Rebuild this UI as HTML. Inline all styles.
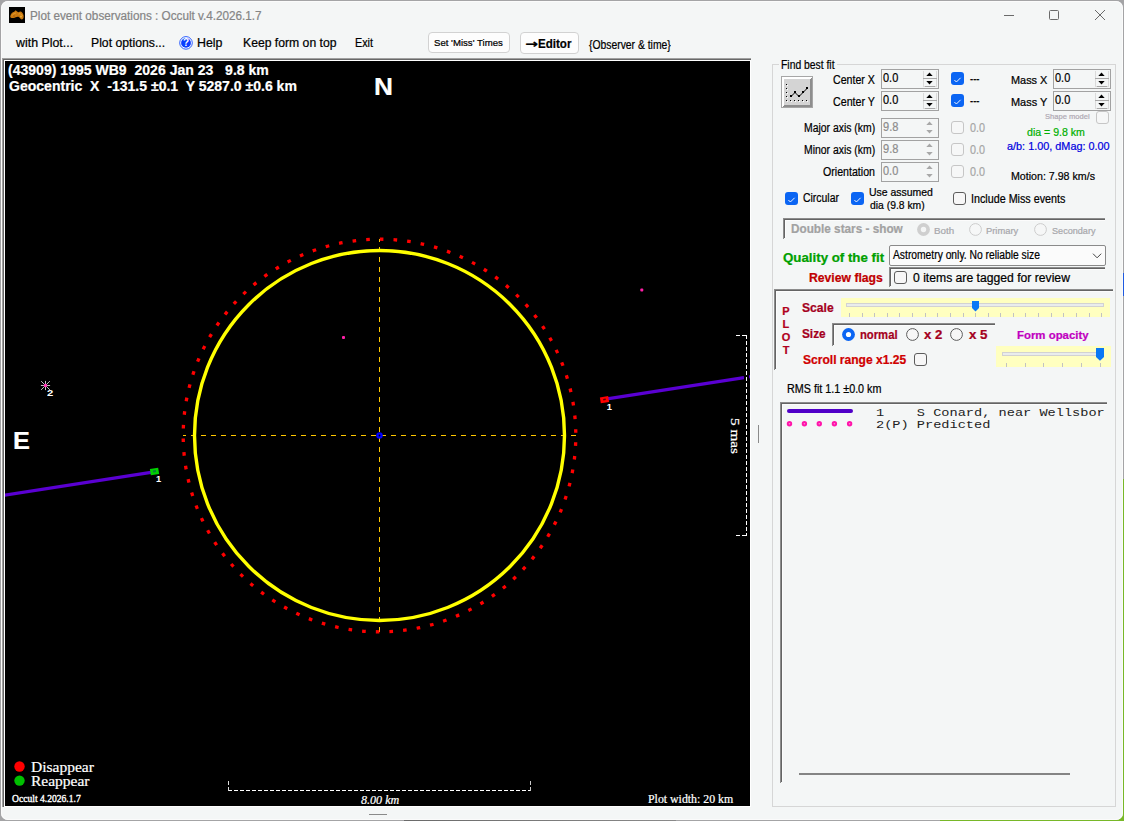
<!DOCTYPE html>
<html lang="en"><head><meta charset="utf-8"><title>Plot event observations : Occult v.4.2026.1.7</title>
<style>
html,body{margin:0;padding:0}
body{width:1124px;height:821px;overflow:hidden;background:#a4a4a6;position:relative}
#edge-r{position:absolute;left:1123px;top:0;width:1px;height:821px;background:linear-gradient(#a4a4a6 0,#a4a4a6 273px,#1e5ae0 273px,#1e5ae0 296px,#a4a4a6 296px,#a4a4a6 479px,#78b828 479px)}
#edge-b{position:absolute;left:0;top:820px;width:1124px;height:1px;background:linear-gradient(90deg,#a4a4a6 0,#a4a4a6 404px,#6a6a6a 404px,#8a8a8a 676px,#a4a4a6 676px,#a4a4a6 940px,#78b828 940px)}
#win{position:absolute;left:1px;top:1px;width:1122px;height:819px;background:#f4f6f6;border-radius:7px;box-shadow:inset 0 0 0 1px #fbfbfb}
#root{position:absolute;left:0;top:0;width:1124px;height:821px}
.a{position:absolute;display:block}
.t{position:absolute;white-space:pre;line-height:normal;transform-origin:0 0}
.ls{font-family:"Liberation Sans",sans-serif}
.lr{font-family:"Liberation Serif",serif}
.lm{font-family:"Liberation Mono",monospace}
.dj{font-family:"DejaVu Sans","Liberation Sans",sans-serif}
.b{font-weight:bold}.i{font-style:italic}
.t{-webkit-text-stroke:0.22px currentColor}
</style></head>
<body>
<div id="edge-r"></div><div id="edge-b"></div><div class="a" style="left:1114px;top:811px;width:10px;height:10px;background:#78b828"></div>
<div id="win"></div>
<div id="root">
<header id="titlebar">
<svg class="a" style="left:9px;top:7px" width="16" height="16" viewBox="0 0 16 16"><rect width="16" height="16" fill="#000"/><path d="M1.2 9.5 C1.5 7 3.5 5.2 5.2 4.8 L6.6 3.2 L8.2 4.6 C9.2 5.6 9.8 5.2 11 4.6 C12.6 4.4 14.2 6.2 14.6 8.6 C15 10.6 14.2 12.4 13 12.6 C11.6 12.6 11 10.6 9.4 9.8 C7.8 9.4 6.4 10.8 4.6 11 C2.8 11.2 1.2 10.8 1.2 9.5 Z" fill="#c8780f"/><path d="M3 8.5 C4 7 5.5 6.2 6.8 6 M9.5 7 C11 6.4 12.6 7 13.4 8.8" stroke="#e8a030" stroke-width="1" fill="none"/><circle cx="12" cy="9.6" r="1" fill="#e8b040"/><circle cx="5" cy="9" r=".8" fill="#a85c08"/></svg>
<span class="t ls" style="left:29.76px;top:8.70px;font-size:12px;color:#858585;transform:scaleX(0.9763);">Plot event observations : Occult v.4.2026.1.7</span>
<svg class="a" style="left:995px;top:5px" width="120" height="22" viewBox="995 5 120 22" fill="none" stroke="#6a6a6a" stroke-width="1"><path d="M1004 15.5H1014"/><rect x="1049.5" y="10.5" width="9" height="9" rx="1"/><path d="M1095 10L1105 20M1105 10L1095 20"/></svg>
</header>
<nav id="menubar">
<span class="t ls" style="left:16.20px;top:35.80px;font-size:12px;color:#000;transform:scaleX(1.0313);">with Plot...</span>
<span class="t ls" style="left:90.72px;top:35.80px;font-size:12px;color:#000;transform:scaleX(1.0187);">Plot options...</span>
<svg class="a" style="left:178px;top:35px" width="16" height="16" viewBox="0 0 16 16"><circle cx="8" cy="7.9" r="6.3" fill="#fff" stroke="#2a5cff" stroke-width="1"/><circle cx="8" cy="7.9" r="4.9" fill="#0a3cff"/><text x="8" y="11.4" text-anchor="middle" font-family="Liberation Sans,sans-serif" font-weight="bold" font-size="10" fill="#fff">?</text></svg>
<span class="t ls" style="left:196.51px;top:35.80px;font-size:12px;color:#000;transform:scaleX(1.0336);">Help</span>
<span class="t ls" style="left:242.53px;top:35.80px;font-size:12px;color:#000;transform:scaleX(1.0155);">Keep form on top</span>
<span class="t ls" style="left:354.64px;top:35.80px;font-size:12px;color:#000;transform:scaleX(0.8966);">Exit</span>
<div class="a " style="left:428px;top:32px;width:82px;height:21px;box-sizing:border-box;border:1px solid #d2d2d2;border-radius:4px;background:#fdfdfd;"></div>
<span class="t ls" style="left:433.57px;top:36.80px;font-size:9.5px;color:#000;transform:scaleX(1.0110);">Set &#x27;Miss&#x27; Times</span>
<div class="a " style="left:520px;top:32px;width:59px;height:22px;box-sizing:border-box;border:1px solid #d2d2d2;border-radius:4px;background:#fdfdfd;"></div>
<span class="t dj b" style="left:525.36px;top:36.90px;font-size:12px;color:#000;transform:scaleX(1.2698);">→</span>
<span class="t ls b" style="left:538.05px;top:35.70px;font-size:13px;color:#000;transform:scaleX(0.8897);">Editor</span>
<span class="t ls" style="left:589.34px;top:37.50px;font-size:12px;color:#000;transform:scaleX(0.8630);">{Observer &amp; time}</span>
</nav>
<main id="plot">
<div class="a " style="left:2px;top:58px;width:749px;height:749px;background:#a0a0a0;"></div>
<div class="a " style="left:3px;top:59px;width:748px;height:748px;background:#696969;"></div>
<div class="a " style="left:4px;top:60px;width:747px;height:747px;background:#fff;"></div>
<div class="a " style="left:5px;top:61px;width:745px;height:745px;background:#000;"></div>
<svg class="a" style="left:5px;top:61px" width="745" height="745" viewBox="5 61 745 745"><g stroke="#5a00d2" stroke-width="3.2" fill="none"><path d="M4 495.36L151 472.45"/><path d="M607 398.95L744 377.69"/><path d="M749 376.90L751 376.60"/></g><g stroke="#ffc800" stroke-width="1" fill="none" shape-rendering="crispEdges"><path d="M183 435.5H576" stroke-dasharray="5 5" stroke-dashoffset="2"/><path d="M379.5 239V632" stroke-dasharray="5 5" stroke-dashoffset="2"/></g><circle cx="379.5" cy="435.5" r="185" fill="none" stroke="#ffff00" stroke-width="3.4"/><circle cx="379.5" cy="435.5" r="196.3" fill="none" stroke="#ff0000" stroke-width="3.3" stroke-dasharray="3.6000 10.1043" stroke-dashoffset="-6.8337"/><circle cx="379.5" cy="435.5" r="2.1" fill="none" stroke="#0000ff" stroke-width="2.4"/><rect x="342.0" y="336.1" width="3" height="3" rx="1" fill="#ff20a8"/><rect x="640.3" y="288.6" width="3" height="3" rx="1" fill="#ff20a8"/><path d="M40.90 385.50L50.10 385.50M41.11 381.11L49.89 389.89M45.50 380.90L45.50 390.10M49.89 381.11L41.11 389.89" stroke="#d8d8d8" stroke-width="0.9" fill="none"/><circle cx="45.5" cy="385.5" r="1.7" fill="#ff30b4"/><g transform="rotate(-9 154.5 471.5)"><rect x="150.3" y="468.3" width="8.4" height="6.4" fill="#00d000"/><rect x="153" y="470.3" width="3" height="2" fill="#0a7a3a"/></g><g transform="rotate(-9 604.5 399.7)"><rect x="600.3" y="396.7" width="8.4" height="6" fill="#ff0000"/><rect x="603.2" y="398.8" width="2.6" height="1.4" fill="#500"/></g><rect x="744" y="333" width="5" height="206" fill="#000"/><g stroke="#fff" stroke-width="1" fill="none" shape-rendering="crispEdges"><path d="M746.5 335V536" stroke-dasharray="4 2"/><path d="M736 335.5H747" stroke-dasharray="4 2"/><path d="M736 535.5H747" stroke-dasharray="4 2"/></g><g stroke="#fff" stroke-width="1" fill="none" shape-rendering="crispEdges"><path d="M228 790.5H531" stroke-dasharray="4 2"/><path d="M228.5 791V780" stroke-dasharray="4 2" stroke="#ddd"/><path d="M530.5 791V780" stroke-dasharray="4 2" stroke="#c8c8c8"/></g><circle cx="19.5" cy="766.5" r="5.2" fill="#ff0000"/><circle cx="19.5" cy="780.6" r="5.2" fill="#00c000"/></svg>
<span class="t ls b" style="left:8.10px;top:62.00px;font-size:14px;color:#fff;transform:scaleX(1.0033);">(43909) 1995 WB9  2026 Jan 23   9.8 km</span>
<span class="t ls b" style="left:8.54px;top:78.00px;font-size:14px;color:#fff;transform:scaleX(1.0022);">Geocentric  X  -131.5 ±0.1  Y 5287.0 ±0.6 km</span>
<span class="t ls b" style="left:373.69px;top:73.00px;font-size:24px;color:#fff;transform:scaleX(1.0946);">N</span>
<span class="t ls b" style="left:12.95px;top:427.10px;font-size:24px;color:#fff;transform:scaleX(1.0546);">E</span>
<span class="t ls b" style="left:46.81px;top:387.80px;font-size:9.33px;color:#fff;transform:scaleX(1.2058);-webkit-text-stroke:0;">2</span>
<span class="t ls b" style="left:156.04px;top:473.60px;font-size:9.33px;color:#fff;-webkit-text-stroke:0;">1</span>
<span class="t ls b" style="left:606.84px;top:401.50px;font-size:9.33px;color:#fff;-webkit-text-stroke:0;">1</span>
<span class="t lr" style="left:30.73px;top:757.90px;font-size:15.5px;color:#fff;transform:scaleX(1.0011);">Disappear</span>
<span class="t lr" style="left:31.03px;top:772.00px;font-size:15.5px;color:#fff;transform:scaleX(1.0001);">Reappear</span>
<span class="t lr" style="left:11.92px;top:793.80px;font-size:9.5px;color:#fff;transform:scaleX(1.0089);-webkit-text-stroke:0.35px #fff;">Occult 4.2026.1.7</span>
<span class="t lr i" style="left:361.16px;top:791.80px;font-size:13px;color:#fff;transform:scaleX(0.9290);">8.00 km</span>
<span class="t lr" style="left:647.64px;top:792.20px;font-size:12.5px;color:#fff;transform:scaleX(0.9477);">Plot width: 20 km</span>
<span class="t lr" style="left:730.5px;top:405.96px;font-size:13.33px;color:#fff;transform-origin:0 12px;transform:rotate(90deg) scaleX(1.1435);">5 mas</span>
</main>
<aside id="panel">
<div class="a " style="left:758px;top:425px;width:1px;height:18px;background:#8a8a8a;"></div>
<div class="a " style="left:369px;top:814px;width:18px;height:1px;background:#8a8a8a;"></div>
<div class="a " style="left:772px;top:64px;width:344px;height:743px;box-sizing:border-box;border:1px solid #d6d6d6;"></div>
<div class="a " style="left:779px;top:60px;width:58px;height:12px;background:#f4f6f6;"></div>
<span class="t ls" style="left:781.17px;top:57.60px;font-size:12px;color:#000;transform:scaleX(0.8629);">Find best fit</span>
<div class="a " style="left:781px;top:76px;width:32px;height:32px;"><svg width="32" height="32" viewBox="781 76 32 32" shape-rendering="crispEdges"><rect x="781" y="76" width="32" height="32" fill="#a6a6a6"/><rect x="782" y="77" width="30" height="30" fill="#8e8e8e"/><path d="M782 77H812L810 79H784V105L782 107Z" fill="#fff"/><rect x="784" y="79" width="26" height="26" fill="#d4d4d4"/><rect x="787" y="85" width="1" height="1" fill="#fff"/><rect x="786" y="84" width="1" height="1" fill="#000"/><rect x="787" y="89" width="1" height="1" fill="#fff"/><rect x="786" y="88" width="1" height="1" fill="#000"/><rect x="787" y="93" width="1" height="1" fill="#fff"/><rect x="786" y="92" width="1" height="1" fill="#000"/><rect x="787" y="97" width="1" height="1" fill="#fff"/><rect x="786" y="96" width="1" height="1" fill="#000"/><rect x="787" y="101" width="1" height="1" fill="#fff"/><rect x="786" y="100" width="1" height="1" fill="#000"/><rect x="791" y="101" width="1" height="1" fill="#fff"/><rect x="790" y="100" width="1" height="1" fill="#000"/><rect x="795" y="101" width="1" height="1" fill="#fff"/><rect x="794" y="100" width="1" height="1" fill="#000"/><rect x="799" y="101" width="1" height="1" fill="#fff"/><rect x="798" y="100" width="1" height="1" fill="#000"/><rect x="803" y="101" width="1" height="1" fill="#fff"/><rect x="802" y="100" width="1" height="1" fill="#000"/><rect x="807" y="101" width="1" height="1" fill="#fff"/><rect x="806" y="100" width="1" height="1" fill="#000"/><path d="M791 96.5L795 92.5L799 96.5L803 92.5L807 88.5" stroke="#000" stroke-width="1" fill="none" shape-rendering="auto"/><rect x="790" y="95" width="2" height="2" fill="#000"/><rect x="794" y="91" width="2" height="2" fill="#000"/><rect x="798" y="95" width="2" height="2" fill="#000"/><rect x="802" y="91" width="2" height="2" fill="#000"/><rect x="806" y="87" width="2" height="2" fill="#000"/></svg></div>
<div class="a " style="left:881px;top:69px;width:58px;height:20px;box-sizing:border-box;border:1px solid #a2a2a2;background:#f4f6f6;"></div>
<div class="a " style="left:923px;top:71px;width:14px;height:16px;box-sizing:border-box;border:1px solid #dadada;border-top:none;"></div>
<div class="a " style="left:923px;top:78px;width:14px;height:1px;background:#a8a8a8;"></div>
<div class="a " style="left:925px;top:86px;width:10px;height:1px;background:#a8a8a8;"></div>
<svg class="a" style="left:923px;top:69px" width="14" height="16" viewBox="0 0 14 16"><path d="M3.3 7L6.5 3.5L9.7 7Z M3.3 12L6.5 15.5L9.7 12Z" fill="#000"/></svg>
<span class="t ls" style="left:883.26px;top:71.00px;font-size:12.5px;color:#000;transform:scaleX(0.8760);">0.0</span>
<div class="a " style="left:881px;top:91px;width:58px;height:20px;box-sizing:border-box;border:1px solid #a2a2a2;background:#f4f6f6;"></div>
<div class="a " style="left:923px;top:93px;width:14px;height:16px;box-sizing:border-box;border:1px solid #dadada;border-top:none;"></div>
<div class="a " style="left:923px;top:100px;width:14px;height:1px;background:#a8a8a8;"></div>
<div class="a " style="left:925px;top:108px;width:10px;height:1px;background:#a8a8a8;"></div>
<svg class="a" style="left:923px;top:91px" width="14" height="16" viewBox="0 0 14 16"><path d="M3.3 7L6.5 3.5L9.7 7Z M3.3 12L6.5 15.5L9.7 12Z" fill="#000"/></svg>
<span class="t ls" style="left:883.26px;top:93.00px;font-size:12.5px;color:#000;transform:scaleX(0.8760);">0.0</span>
<div class="a " style="left:1053px;top:69px;width:58px;height:20px;box-sizing:border-box;border:1px solid #a2a2a2;background:#f4f6f6;"></div>
<div class="a " style="left:1095px;top:71px;width:14px;height:16px;box-sizing:border-box;border:1px solid #dadada;border-top:none;"></div>
<div class="a " style="left:1095px;top:78px;width:14px;height:1px;background:#a8a8a8;"></div>
<div class="a " style="left:1097px;top:86px;width:10px;height:1px;background:#a8a8a8;"></div>
<svg class="a" style="left:1095px;top:69px" width="14" height="16" viewBox="0 0 14 16"><path d="M3.3 7L6.5 3.5L9.7 7Z M3.3 12L6.5 15.5L9.7 12Z" fill="#000"/></svg>
<span class="t ls" style="left:1055.26px;top:71.00px;font-size:12.5px;color:#000;transform:scaleX(0.8760);">0.0</span>
<div class="a " style="left:1053px;top:91px;width:58px;height:20px;box-sizing:border-box;border:1px solid #a2a2a2;background:#f4f6f6;"></div>
<div class="a " style="left:1095px;top:93px;width:14px;height:16px;box-sizing:border-box;border:1px solid #dadada;border-top:none;"></div>
<div class="a " style="left:1095px;top:100px;width:14px;height:1px;background:#a8a8a8;"></div>
<div class="a " style="left:1097px;top:108px;width:10px;height:1px;background:#a8a8a8;"></div>
<svg class="a" style="left:1095px;top:91px" width="14" height="16" viewBox="0 0 14 16"><path d="M3.3 7L6.5 3.5L9.7 7Z M3.3 12L6.5 15.5L9.7 12Z" fill="#000"/></svg>
<span class="t ls" style="left:1055.26px;top:93.00px;font-size:12.5px;color:#000;transform:scaleX(0.8760);">0.0</span>
<div class="a " style="left:881px;top:118px;width:58px;height:20px;box-sizing:border-box;border:1px solid #a2a2a2;background:#f4f6f6;"></div>
<svg class="a" style="left:923px;top:118px" width="14" height="16" viewBox="0 0 14 16"><path d="M3.3 7L6.5 3.5L9.7 7Z M3.3 12L6.5 15.5L9.7 12Z" fill="#a8a8a8"/></svg>
<span class="t ls" style="left:883.20px;top:120.00px;font-size:12.5px;color:#8c8c8c;transform:scaleX(0.8828);">9.8</span>
<div class="a " style="left:881px;top:140px;width:58px;height:20px;box-sizing:border-box;border:1px solid #a2a2a2;background:#f4f6f6;"></div>
<svg class="a" style="left:923px;top:140px" width="14" height="16" viewBox="0 0 14 16"><path d="M3.3 7L6.5 3.5L9.7 7Z M3.3 12L6.5 15.5L9.7 12Z" fill="#a8a8a8"/></svg>
<span class="t ls" style="left:883.20px;top:142.00px;font-size:12.5px;color:#8c8c8c;transform:scaleX(0.8828);">9.8</span>
<div class="a " style="left:881px;top:162px;width:58px;height:20px;box-sizing:border-box;border:1px solid #a2a2a2;background:#f4f6f6;"></div>
<svg class="a" style="left:923px;top:162px" width="14" height="16" viewBox="0 0 14 16"><path d="M3.3 7L6.5 3.5L9.7 7Z M3.3 12L6.5 15.5L9.7 12Z" fill="#a8a8a8"/></svg>
<span class="t ls" style="left:883.26px;top:164.00px;font-size:12.5px;color:#8c8c8c;transform:scaleX(0.8760);">0.0</span>
<span class="t ls" style="left:833.17px;top:73.00px;font-size:12px;color:#000;transform:scaleX(0.8860);">Center X</span>
<span class="t ls" style="left:833.17px;top:95.00px;font-size:12px;color:#000;transform:scaleX(0.8906);">Center Y</span>
<span class="t ls" style="left:1011.13px;top:74.00px;font-size:11px;color:#000;transform:scaleX(0.9907);">Mass X</span>
<span class="t ls" style="left:1011.12px;top:96.00px;font-size:11px;color:#000;transform:scaleX(0.9953);">Mass Y</span>
<span class="t ls" style="left:804.37px;top:121.40px;font-size:12px;color:#000;transform:scaleX(0.8682);">Major axis (km)</span>
<span class="t ls" style="left:804.37px;top:143.30px;font-size:12px;color:#000;transform:scaleX(0.8682);">Minor axis (km)</span>
<span class="t ls" style="left:823.22px;top:164.90px;font-size:12px;color:#000;transform:scaleX(0.8856);">Orientation</span>
<div class="a " style="left:951px;top:72px;width:13px;height:13px;background:#0b65f3;border-radius:3px;"><svg width="13" height="13" viewBox="0 0 13 13"><path d="M3.4 7.0L5.4 9.0L9.6 4.8" stroke="#fff" stroke-opacity=".92" stroke-width="1" fill="none"/></svg></div>
<div class="a " style="left:951px;top:94px;width:13px;height:13px;background:#0b65f3;border-radius:3px;"><svg width="13" height="13" viewBox="0 0 13 13"><path d="M3.4 7.0L5.4 9.0L9.6 4.8" stroke="#fff" stroke-opacity=".92" stroke-width="1" fill="none"/></svg></div>
<span class="t ls" style="left:969.87px;top:72.00px;font-size:12px;color:#000;transform:scaleX(0.7875);">---</span>
<span class="t ls" style="left:969.87px;top:94.00px;font-size:12px;color:#000;transform:scaleX(0.7875);">---</span>
<div class="a " style="left:951px;top:121px;width:13px;height:13px;box-sizing:border-box;border:1px solid #c6c6c6;border-radius:3px;background:#f6f7f7;"></div>
<div class="a " style="left:951px;top:143px;width:13px;height:13px;box-sizing:border-box;border:1px solid #c6c6c6;border-radius:3px;background:#f6f7f7;"></div>
<div class="a " style="left:951px;top:165px;width:13px;height:13px;box-sizing:border-box;border:1px solid #c6c6c6;border-radius:3px;background:#f6f7f7;"></div>
<span class="t ls" style="left:969.87px;top:120.60px;font-size:12px;color:#a6a6a6;transform:scaleX(0.8999);">0.0</span>
<span class="t ls" style="left:969.87px;top:142.50px;font-size:12px;color:#a6a6a6;transform:scaleX(0.8999);">0.0</span>
<span class="t ls" style="left:969.87px;top:164.50px;font-size:12px;color:#a6a6a6;transform:scaleX(0.8999);">0.0</span>
<span class="t ls" style="left:1044.96px;top:111.50px;font-size:8px;color:#b0aab4;transform:scaleX(0.9451);">Shape model</span>
<div class="a " style="left:1096px;top:111px;width:13px;height:13px;box-sizing:border-box;border:1px solid #c6c6c6;border-radius:3px;background:#f6f7f7;"></div>
<span class="t ls" style="left:1026.78px;top:125.90px;font-size:11px;color:#00b000;transform:scaleX(0.9616);">dia = 9.8 km</span>
<span class="t ls" style="left:1007.47px;top:140.10px;font-size:11px;color:#0000e0;transform:scaleX(0.9872);">a/b: 1.00, dMag: 0.00</span>
<span class="t ls" style="left:1011.15px;top:170.00px;font-size:11px;color:#000;transform:scaleX(0.9670);">Motion: 7.98 km/s</span>
<div class="a " style="left:785px;top:192px;width:13px;height:13px;background:#0b65f3;border-radius:3px;"><svg width="13" height="13" viewBox="0 0 13 13"><path d="M3.4 7.0L5.4 9.0L9.6 4.8" stroke="#fff" stroke-opacity=".92" stroke-width="1" fill="none"/></svg></div>
<span class="t ls" style="left:803.08px;top:191.40px;font-size:12px;color:#000;transform:scaleX(0.8703);">Circular</span>
<div class="a " style="left:851px;top:192px;width:13px;height:13px;background:#0b65f3;border-radius:3px;"><svg width="13" height="13" viewBox="0 0 13 13"><path d="M3.4 7.0L5.4 9.0L9.6 4.8" stroke="#fff" stroke-opacity=".92" stroke-width="1" fill="none"/></svg></div>
<span class="t ls" style="left:869.32px;top:185.70px;font-size:11px;color:#000;transform:scaleX(0.9501);">Use assumed</span>
<span class="t ls" style="left:869.69px;top:198.80px;font-size:11px;color:#000;transform:scaleX(0.9416);">dia (9.8 km)</span>
<div class="a " style="left:953px;top:192px;width:13px;height:13px;box-sizing:border-box;border:1px solid #5c5c5c;border-radius:3px;background:#f7f7f7;"></div>
<span class="t ls" style="left:971.23px;top:191.60px;font-size:12px;color:#000;transform:scaleX(0.8954);">Include Miss events</span>
<div class="a " style="left:783px;top:218px;width:322px;height:1px;background:#8c8c8c;"></div>
<div class="a " style="left:783px;top:219px;width:322px;height:1px;background:#646464;"></div>
<div class="a " style="left:783px;top:218px;width:1px;height:21px;background:#8c8c8c;"></div>
<div class="a " style="left:784px;top:219px;width:1px;height:19px;background:#646464;"></div>
<div class="a " style="left:785px;top:220px;width:320px;height:1px;background:#fcfcfc;"></div>
<div class="a " style="left:785px;top:220px;width:1px;height:17px;background:#fcfcfc;"></div>
<span class="t ls b" style="left:790.84px;top:221.90px;font-size:12px;color:#a2a2a2;transform:scaleX(0.9799);">Double stars - show</span>
<svg class="a" style="left:915.9px;top:222.1px" width="15" height="15" viewBox="-7.5 -7.5 15 15"><circle r="6.4" fill="#cfcfcf"/><circle r="2.7" fill="#f4f5f5"/></svg>
<svg class="a" style="left:967.9px;top:222.0px" width="15" height="15" viewBox="-7.5 -7.5 15 15"><circle r="5.9" fill="#f6f7f7" stroke="#cdcdcd" stroke-width="1"/></svg>
<svg class="a" style="left:1032.8px;top:222.0px" width="15" height="15" viewBox="-7.5 -7.5 15 15"><circle r="5.9" fill="#f6f7f7" stroke="#cdcdcd" stroke-width="1"/></svg>
<span class="t ls" style="left:934.32px;top:225.60px;font-size:9.33px;color:#a8a8ac;transform:scaleX(1.0494);">Both</span>
<span class="t ls" style="left:986.35px;top:225.80px;font-size:9.33px;color:#a8a8ac;transform:scaleX(1.0033);">Primary</span>
<span class="t ls" style="left:1051.69px;top:225.80px;font-size:9.33px;color:#a8a8ac;transform:scaleX(0.9756);">Secondary</span>
<span class="t ls b" style="left:782.77px;top:251.00px;font-size:12px;color:#00a000;transform:scaleX(1.1067);">Quality of the fit</span>
<div class="a " style="left:889px;top:245px;width:217px;height:21px;box-sizing:border-box;border:1px solid #8a8a8a;border-radius:2px;background:#fbfbfb;"></div>
<span class="t ls" style="left:892.50px;top:248.00px;font-size:12px;color:#000;transform:scaleX(0.8582);">Astrometry only. No reliable size</span>
<svg class="a" style="left:1091px;top:251px" width="12" height="9" viewBox="1091 251 12 9"><path d="M1093 253.7L1097.1 257.8L1101.2 253.7" stroke="#444" stroke-width="1" fill="none"/></svg>
<span class="t ls b" style="left:808.81px;top:271.40px;font-size:12px;color:#c00000;transform:scaleX(1.0154);">Review flags</span>
<div class="a " style="left:889px;top:267px;width:216px;height:1px;background:#8c8c8c;"></div>
<div class="a " style="left:889px;top:268px;width:216px;height:1px;background:#646464;"></div>
<div class="a " style="left:889px;top:267px;width:1px;height:20px;background:#8c8c8c;"></div>
<div class="a " style="left:890px;top:268px;width:1px;height:18px;background:#646464;"></div>
<div class="a " style="left:891px;top:269px;width:214px;height:1px;background:#fcfcfc;"></div>
<div class="a " style="left:891px;top:269px;width:1px;height:16px;background:#fcfcfc;"></div>
<div class="a " style="left:894px;top:271px;width:13px;height:13px;box-sizing:border-box;border:1px solid #5c5c5c;border-radius:3px;background:#f7f7f7;"></div>
<span class="t ls" style="left:912.81px;top:271.40px;font-size:12px;color:#000;transform:scaleX(1.0141);">0 items are tagged for review</span>
<div class="a " style="left:774px;top:289px;width:339px;height:1px;background:#8c8c8c;"></div>
<div class="a " style="left:774px;top:290px;width:339px;height:1px;background:#646464;"></div>
<div class="a " style="left:774px;top:289px;width:1px;height:81px;background:#8c8c8c;"></div>
<div class="a " style="left:775px;top:290px;width:1px;height:79px;background:#646464;"></div>
<div class="a " style="left:776px;top:291px;width:337px;height:1px;background:#fcfcfc;"></div>
<div class="a " style="left:776px;top:291px;width:1px;height:77px;background:#fcfcfc;"></div>
<span class="t ls b" style="left:782.15px;top:305.40px;font-size:11px;color:#b00020;">P</span>
<span class="t ls b" style="left:782.45px;top:318.40px;font-size:11px;color:#b00020;">L</span>
<span class="t ls b" style="left:781.74px;top:331.40px;font-size:11px;color:#b00020;">O</span>
<span class="t ls b" style="left:782.64px;top:344.40px;font-size:11px;color:#b00020;">T</span>
<span class="t ls b" style="left:802.44px;top:301.00px;font-size:12px;color:#a40020;transform:scaleX(1.0098);">Scale</span>
<span class="t ls b" style="left:802.45px;top:326.50px;font-size:12px;color:#a40020;transform:scaleX(0.9837);">Size</span>
<div class="a " style="left:841px;top:298px;width:269px;height:19px;background:#ffffc0;"><div class="a" style="left:5px;top:5px;width:258px;height:4px;box-sizing:border-box;border:1px solid #d2d2d2;background:#e9ecec"></div><div class="a" style="left:8px;top:15px;width:1px;height:4px;background:#c2c2c2"></div><div class="a" style="left:21px;top:15px;width:1px;height:4px;background:#c2c2c2"></div><div class="a" style="left:33px;top:15px;width:1px;height:4px;background:#c2c2c2"></div><div class="a" style="left:46px;top:15px;width:1px;height:4px;background:#c2c2c2"></div><div class="a" style="left:58px;top:15px;width:1px;height:4px;background:#c2c2c2"></div><div class="a" style="left:71px;top:15px;width:1px;height:4px;background:#c2c2c2"></div><div class="a" style="left:84px;top:15px;width:1px;height:4px;background:#c2c2c2"></div><div class="a" style="left:96px;top:15px;width:1px;height:4px;background:#c2c2c2"></div><div class="a" style="left:109px;top:15px;width:1px;height:4px;background:#c2c2c2"></div><div class="a" style="left:122px;top:15px;width:1px;height:4px;background:#c2c2c2"></div><div class="a" style="left:134px;top:15px;width:1px;height:4px;background:#c2c2c2"></div><div class="a" style="left:147px;top:15px;width:1px;height:4px;background:#c2c2c2"></div><div class="a" style="left:159px;top:15px;width:1px;height:4px;background:#c2c2c2"></div><div class="a" style="left:172px;top:15px;width:1px;height:4px;background:#c2c2c2"></div><div class="a" style="left:184px;top:15px;width:1px;height:4px;background:#c2c2c2"></div><div class="a" style="left:197px;top:15px;width:1px;height:4px;background:#c2c2c2"></div><div class="a" style="left:210px;top:15px;width:1px;height:4px;background:#c2c2c2"></div><div class="a" style="left:222px;top:15px;width:1px;height:4px;background:#c2c2c2"></div><div class="a" style="left:235px;top:15px;width:1px;height:4px;background:#c2c2c2"></div><div class="a" style="left:248px;top:15px;width:1px;height:4px;background:#c2c2c2"></div><div class="a" style="left:260px;top:15px;width:1px;height:4px;background:#c2c2c2"></div><svg class="a" style="left:131px;top:3px" width="7" height="11" viewBox="0 0 7 11"><path d="M0 0H7V7L3.5 10.6L0 7Z" fill="#0a78f5"/></svg></div>
<div class="a " style="left:832px;top:323px;width:163px;height:1px;background:#8c8c8c;"></div>
<div class="a " style="left:832px;top:324px;width:163px;height:1px;background:#646464;"></div>
<div class="a " style="left:832px;top:323px;width:1px;height:23px;background:#8c8c8c;"></div>
<div class="a " style="left:833px;top:324px;width:1px;height:21px;background:#646464;"></div>
<div class="a " style="left:834px;top:325px;width:161px;height:1px;background:#fcfcfc;"></div>
<div class="a " style="left:834px;top:325px;width:1px;height:19px;background:#fcfcfc;"></div>
<svg class="a" style="left:841.0px;top:327.1px" width="15" height="15" viewBox="-7.5 -7.5 15 15"><circle r="6.4" fill="#0b65f3"/><circle r="2.6" fill="#fff"/></svg>
<svg class="a" style="left:904.7px;top:326.9px" width="15" height="15" viewBox="-7.5 -7.5 15 15"><circle r="5.9" fill="#f7f7f7" stroke="#5c5c5c" stroke-width="1"/></svg>
<svg class="a" style="left:948.9px;top:326.7px" width="15" height="15" viewBox="-7.5 -7.5 15 15"><circle r="5.9" fill="#f7f7f7" stroke="#5c5c5c" stroke-width="1"/></svg>
<span class="t ls b" style="left:860.27px;top:327.60px;font-size:12px;color:#a40020;transform:scaleX(0.9375);">normal</span>
<span class="t ls b" style="left:924.43px;top:327.60px;font-size:12px;color:#a40020;transform:scaleX(1.0967);">x 2</span>
<span class="t ls b" style="left:968.53px;top:327.60px;font-size:12px;color:#a40020;transform:scaleX(1.1091);">x 5</span>
<span class="t ls b" style="left:1017.06px;top:328.70px;font-size:11px;color:#c000c0;transform:scaleX(1.0365);">Form opacity</span>
<span class="t ls b" style="left:803.24px;top:352.50px;font-size:12px;color:#d00000;transform:scaleX(1.0043);">Scroll range x1.25</span>
<div class="a " style="left:914px;top:353px;width:13px;height:13px;box-sizing:border-box;border:1px solid #5c5c5c;border-radius:3px;background:#f7f7f7;"></div>
<div class="a " style="left:996px;top:346px;width:115px;height:21px;background:#ffffc0;"><div class="a" style="left:6px;top:6px;width:102px;height:4px;box-sizing:border-box;border:1px solid #d2d2d2;background:#e9ecec"></div><div class="a" style="left:10px;top:17px;width:1px;height:4px;background:#c2c2c2"></div><div class="a" style="left:29px;top:17px;width:1px;height:4px;background:#c2c2c2"></div><div class="a" style="left:47px;top:17px;width:1px;height:4px;background:#c2c2c2"></div><div class="a" style="left:66px;top:17px;width:1px;height:4px;background:#c2c2c2"></div><div class="a" style="left:85px;top:17px;width:1px;height:4px;background:#c2c2c2"></div><div class="a" style="left:104px;top:17px;width:1px;height:4px;background:#c2c2c2"></div><svg class="a" style="left:100px;top:2px" width="8" height="13" viewBox="0 0 8 13"><path d="M0 0H8V9L4 12.8L0 9Z" fill="#0a78f5"/></svg></div>
<span class="t ls" style="left:787.24px;top:381.90px;font-size:12px;color:#000;transform:scaleX(0.8971);">RMS fit 1.1 ±0.0 km</span>
<div class="a " style="left:780px;top:402px;width:327px;height:1px;background:#8c8c8c;"></div>
<div class="a " style="left:780px;top:403px;width:327px;height:1px;background:#646464;"></div>
<div class="a " style="left:780px;top:402px;width:1px;height:381px;background:#8c8c8c;"></div>
<div class="a " style="left:781px;top:403px;width:1px;height:379px;background:#646464;"></div>
<div class="a " style="left:782px;top:404px;width:325px;height:1px;background:#fcfcfc;"></div>
<div class="a " style="left:782px;top:404px;width:1px;height:377px;background:#fcfcfc;"></div>
<div class="a " style="left:787px;top:409px;width:66px;height:4px;background:#5000c8;border-radius:2px;"></div>
<svg class="a" style="left:785px;top:419px" width="70" height="10" viewBox="785 419 70 10"><circle cx="789.5" cy="423.7" r="2.7" fill="#ff14aa"/><circle cx="789.5" cy="423.7" r="0.8" fill="#ff8ad4"/><circle cx="804.4" cy="423.7" r="2.7" fill="#ff14aa"/><circle cx="804.4" cy="423.7" r="0.8" fill="#ff8ad4"/><circle cx="819.3" cy="423.7" r="2.7" fill="#ff14aa"/><circle cx="819.3" cy="423.7" r="0.8" fill="#ff8ad4"/><circle cx="834.4" cy="423.7" r="2.7" fill="#ff14aa"/><circle cx="834.4" cy="423.7" r="0.8" fill="#ff8ad4"/><circle cx="849.6" cy="423.7" r="2.7" fill="#ff14aa"/><circle cx="849.6" cy="423.7" r="0.8" fill="#ff8ad4"/></svg>
<span class="t lm" style="left:875.90px;top:406.10px;font-size:11.5px;color:#222;-webkit-text-stroke:0;transform:scaleX(1.1839)">1    S Conard, near Wellsbor</span>
<span class="t lm" style="left:875.90px;top:417.90px;font-size:11.5px;color:#222;-webkit-text-stroke:0;transform:scaleX(1.1839)">2(P) Predicted</span>
<div class="a " style="left:799px;top:773px;width:271px;height:2px;background:#848484;"></div>
</aside>
</div>
</body></html>
